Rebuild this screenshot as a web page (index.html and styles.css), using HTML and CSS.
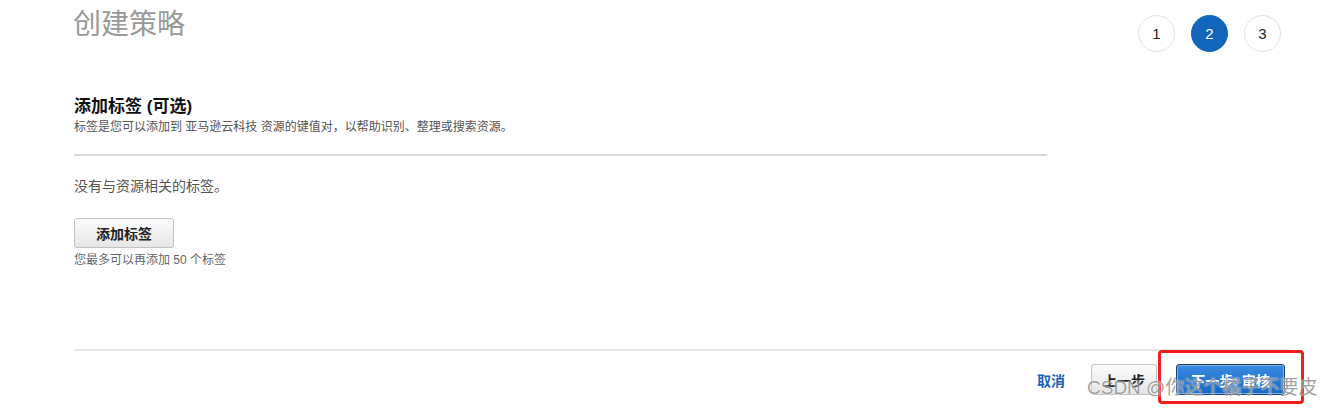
FILE: index.html
```html
<!DOCTYPE html>
<html lang="zh-CN">
<head>
    <meta charset="UTF-8">
    <meta name="viewport" content="width=device-width, initial-scale=1.0">
    <title>创建策略</title>
    <link rel="stylesheet" href="styles.css">
</head>
<body>

    <div class="page">
        <!-- Header: title + wizard steps -->
        <div class="header">
            <h1 class="page-title">创建策略</h1>
            <div class="steps">
                <span class="step">1</span>
                <span class="step active">2</span>
                <span class="step">3</span>
            </div>
        </div>

        <!-- Tags section -->
        <div class="tags-section">
            <h2>添加标签 (可选)</h2>
            <p class="desc">标签是您可以添加到 亚马逊云科技 资源的键值对，以帮助识别、整理或搜索资源。</p>
            <div class="divider"></div>
            <p class="empty">没有与资源相关的标签。</p>
            <button type="button" class="btn btn-default">添加标签</button>
            <p class="hint">您最多可以再添加 50 个标签</p>
        </div>

        <!-- Footer actions -->
        <div class="footer">
            <a href="#" class="cancel">取消</a>
            <button type="button" class="btn btn-prev">上一步</button>
            <div class="next-wrap">
                <button type="button" class="btn btn-primary">下一步: 审核</button>
                <span class="highlight"></span>
            </div>
        </div>
    </div>

    <div class="watermark">CSDN @你这个橘子不要皮</div>

</body>
</html>
```
FILE: styles.css
```css
/* Basic resets */
* {
    margin: 0;
    padding: 0;
    box-sizing: border-box;
}

body {
    font-family: "Liberation Sans", Arial, "Noto Sans CJK SC", sans-serif;
    background-color: #fff;
    color: #333;
    width: 1333px;
    height: 409px;
    overflow: hidden;
    position: relative;
}

.page {
    padding: 0 43px 0 74px;
}

/* Header */
.header {
    display: flex;
    justify-content: space-between;
    align-items: flex-start;
    height: 96px;
}

.page-title {
    font-size: 28px;
    font-weight: normal;
    line-height: 34px;
    color: #999;
    margin-top: 8px;
    margin-left: -1px;
}

.steps {
    display: flex;
    gap: 16px;
    margin-top: 15px;
    margin-right: 9px;
}

.step {
    width: 37px;
    height: 37px;
    border-radius: 50%;
    border: 1px solid #e1e1e1;
    display: flex;
    align-items: center;
    justify-content: center;
    font-size: 15px;
    color: #222;
}

.step.active {
    background-color: #1166bb;
    border-color: #1166bb;
    color: #fff;
}

/* Tags section */
.tags-section {
    width: 973px;
}

.tags-section h2 {
    font-size: 17px;
    font-weight: bold;
    line-height: 22px;
    color: #111;
}

.desc {
    font-size: 12px;
    line-height: 16px;
    color: #555;
    margin-top: 1px;
}

.divider {
    height: 2px;
    background-color: #d5dbdb;
    margin-top: 19px;
}

.empty {
    font-size: 14px;
    line-height: 18px;
    color: #555;
    margin-top: 21px;
}

.btn {
    font-family: "Liberation Sans", Arial, "Noto Sans CJK SC", sans-serif;
    cursor: pointer;
    border-radius: 3px;
}

.btn-default {
    width: 100px;
    height: 30px;
    margin-top: 23px;
    border: 1px solid #c2c2c2;
    background: linear-gradient(#fbfbfb, #e6e6e6);
    font-size: 14px;
    font-weight: bold;
    color: #222;
}

.hint {
    font-size: 12px;
    line-height: 16px;
    color: #666;
    margin-top: 4px;
}

/* Footer */
.footer {
    margin-top: 81px;
    border-top: 2px solid #e6e6e6;
    display: flex;
    justify-content: flex-end;
    align-items: center;
    padding-top: 13px;
}

.cancel {
    font-size: 14px;
    font-weight: bold;
    color: #1a63b8;
    text-decoration: none;
    margin-right: 26px;
}

.btn-prev {
    width: 66px;
    height: 31px;
    border: 1px solid #c2c2c2;
    background: linear-gradient(#fbfbfb, #e4e4e4);
    font-size: 14px;
    font-weight: bold;
    color: #222;
    margin-right: 19px;
}

.next-wrap {
    position: relative;
    margin-right: 5px;
}

.btn-primary {
    display: block;
    width: 109px;
    height: 31px;
    border: 1px solid #1a3f6e;
    box-shadow: inset 0 0 0 1px #7fb0e6;
    background: linear-gradient(#3a8ae0, #1567c4);
    font-size: 14px;
    font-weight: bold;
    color: #fff;
}

/* red annotation box */
.highlight {
    position: absolute;
    left: -18px;
    top: -14px;
    width: 146px;
    height: 54px;
    border: 3px solid #f21d1d;
    border-radius: 4px;
}

/* CSDN watermark */
.watermark {
    position: absolute;
    left: 1087px;
    top: 375px;
    font-size: 19px;
    line-height: 26px;
    color: rgba(120, 120, 120, 0.7);
    text-shadow: 0 0 2px #fff;
    white-space: nowrap;
}
```
